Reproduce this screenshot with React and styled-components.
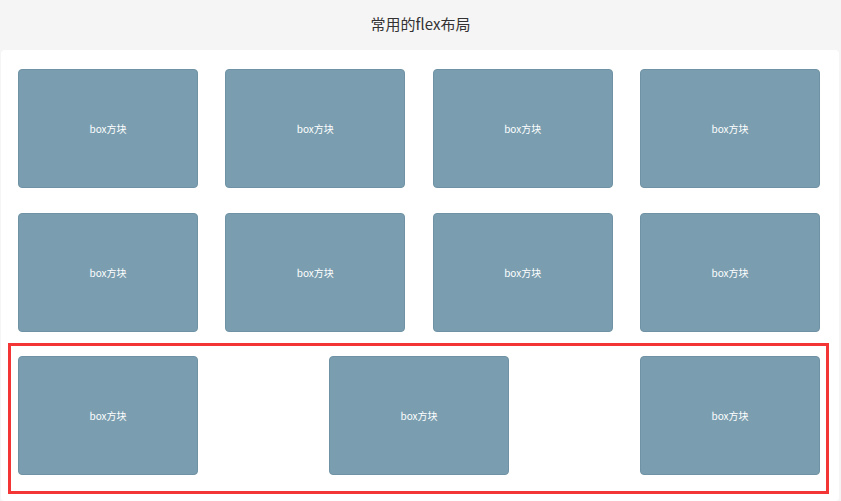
import React from "react";
import styled, { createGlobalStyle } from "styled-components";

const Global = createGlobalStyle`
  html, body { margin: 0; padding: 0; background: #f5f5f5; }
  body { font-family: "Noto Sans CJK SC", "Noto Sans", sans-serif; }
`;

const Page = styled.div`
  width: 841px;
  height: 501px;
  background: #f5f5f5;
  display: flex;
  flex-direction: column;
  overflow: hidden;
`;

const Title = styled.div`
  height: 50px;
  display: flex;
  align-items: center;
  justify-content: center;
  font-size: 15px;
  color: #333;
  padding-bottom: 4px;
  box-sizing: border-box;
`;

const Panel = styled.div`
  margin: 0 2px 0 1px;
  background: #fff;
  border-radius: 4px;
  padding: 19px 19px 6px 17px;
  display: flex;
  flex-direction: column;
  gap: 25px;
  flex: 1;
`;

const Row = styled.div`
  display: flex;
  justify-content: space-between;
`;

const RedRow = styled(Row)`
  margin: -14px -9px 0 -10px;
  padding: 10px 6px 16px 7px;
  border: 3px solid #f33535;
`;

const Box = styled.div`
  width: 180px;
  height: 119px;
  background: #7a9eaf;
  border: 1px solid #6f93a4;
  box-sizing: border-box;
  border-radius: 4px;
  display: flex;
  align-items: center;
  justify-content: center;
  color: #fff;
  font-size: 10px;
`;

const B = () => <Box>box方块</Box>;

export default function App() {
  return (
    <Page>
      <Global />
      <Title>常用的flex布局</Title>
      <Panel>
        <Row><B /><B /><B /><B /></Row>
        <Row><B /><B /><B /><B /></Row>
        <RedRow><B /><B /><B /></RedRow>
      </Panel>
    </Page>
  );
}
